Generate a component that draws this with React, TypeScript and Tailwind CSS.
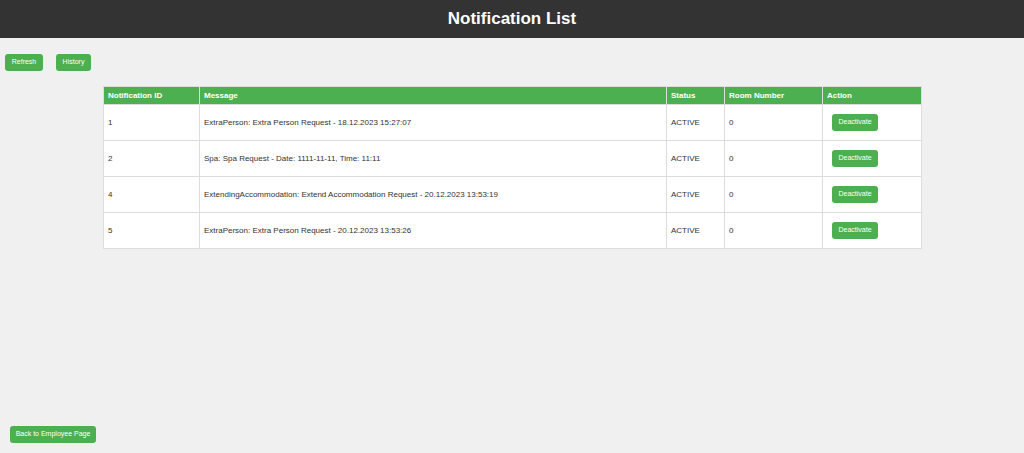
import React from 'react';

const rows = [
  { id: 1, message: 'ExtraPerson: Extra Person Request - 18.12.2023 15:27:07', status: 'ACTIVE', room: 0 },
  { id: 2, message: 'Spa: Spa Request - Date: 1111-11-11, Time: 11:11', status: 'ACTIVE', room: 0 },
  { id: 4, message: 'ExtendingAccommodation: Extend Accommodation Request - 20.12.2023 13:53:19', status: 'ACTIVE', room: 0 },
  { id: 5, message: 'ExtraPerson: Extra Person Request - 20.12.2023 13:53:26', status: 'ACTIVE', room: 0 },
];

const App: React.FC = () => {
  return (
    <div className="flex flex-col h-[453px] bg-[#f0f0f0] font-['Liberation_Sans',Arial,sans-serif] text-[#333]">
      <header className="h-[38px] bg-[#333333] flex items-center justify-center">
        <h1 className="text-white text-[17px] font-bold">Notification List</h1>
      </header>

      <div className="flex gap-[13px] pl-[5px] mt-[16px]">
        <button className="h-[17px] w-[38px] bg-[#4caf50] text-white text-[7px] rounded-[3px]">Refresh</button>
        <button className="h-[17px] w-[35px] bg-[#4caf50] text-white text-[7px] rounded-[3px]">History</button>
      </div>

      <table className="ml-[103px] mt-[15px] w-[819px] border-collapse bg-white text-[8px]">
        <thead>
          <tr className="bg-[#4caf50] text-white text-left h-[18px]">
            <th className="w-[96px] px-[4px] border border-[#ddd] font-bold">Notification ID</th>
            <th className="w-[467px] px-[4px] border border-[#ddd] font-bold">Message</th>
            <th className="w-[58px] px-[4px] border border-[#ddd] font-bold">Status</th>
            <th className="w-[98px] px-[4px] border border-[#ddd] font-bold">Room Number</th>
            <th className="px-[4px] border border-[#ddd] font-bold">Action</th>
          </tr>
        </thead>
        <tbody>
          {rows.map((r) => (
            <tr key={r.id} className="h-[36px]">
              <td className="px-[4px] border border-[#ddd]">{r.id}</td>
              <td className="px-[4px] border border-[#ddd]">{r.message}</td>
              <td className="px-[4px] border border-[#ddd]">{r.status}</td>
              <td className="px-[4px] border border-[#ddd]">{r.room}</td>
              <td className="pl-[9px] border border-[#ddd]">
                <button className="h-[17px] w-[46px] bg-[#4caf50] text-white text-[7px] rounded-[3px]">Deactivate</button>
              </td>
            </tr>
          ))}
        </tbody>
      </table>

      <div className="mt-auto pl-[10px] pb-[10px]">
        <button className="h-[17px] w-[86px] bg-[#4caf50] text-white text-[7px] rounded-[3px]">Back to Employee Page</button>
      </div>
    </div>
  );
};

export default App;
